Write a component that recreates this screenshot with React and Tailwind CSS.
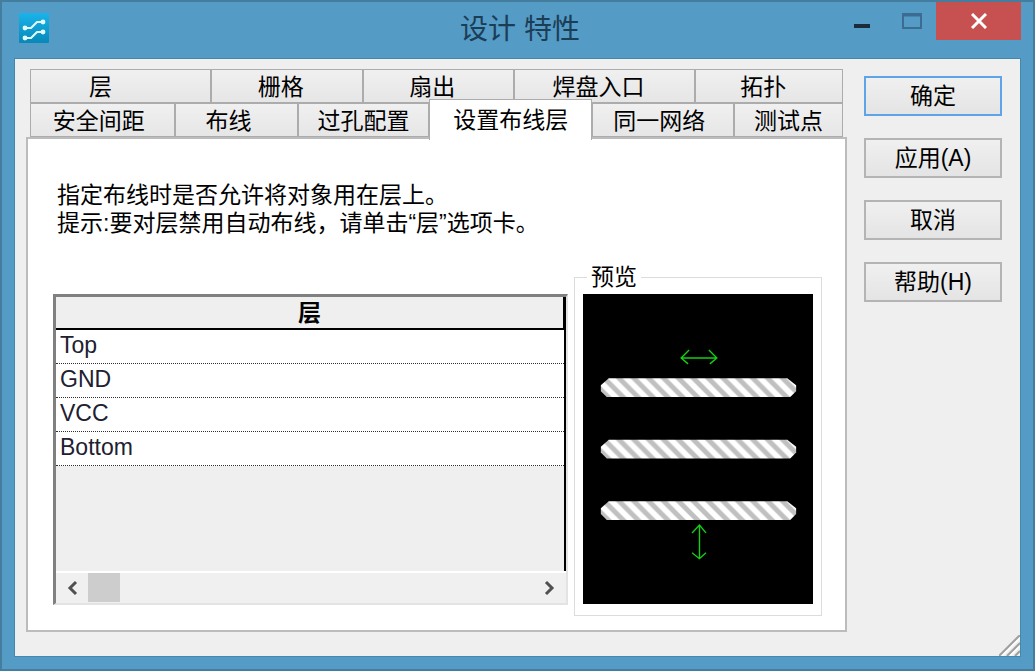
import clsx from 'clsx'

const TABS_BACK = [
  { label: '层',       size: 'flex-[158_1_0%]', pad: 'pr-10' },
  { label: '栅格',     size: 'flex-[157_1_0%]', pad: 'pr-3' },
  { label: '扇出',     size: 'flex-[156_1_0%]', pad: 'pr-3' },
  { label: '焊盘入口', size: 'flex-[191_1_0%]', pad: 'pr-3' },
  { label: '拓扑',     size: 'flex-[152_1_0%]', pad: 'pr-3' },
]

const TABS_FRONT = [
  { label: '安全间距',   size: 'flex-[143_1_0%]', pad: 'pr-2' },
  { label: '布线',       size: 'flex-[110_1_0%]', pad: 'pr-4' },
  { label: '过孔配置',   size: 'flex-[137_1_0%]' },
  { label: '设置布线层', size: 'flex-[170_1_0%]', active: true },
  { label: '同一网络',   size: 'flex-[139_1_0%]', pad: 'pr-2' },
  { label: '测试点',     size: 'flex-[113_1_0%]' },
]

const LAYERS = ['Top', 'GND', 'VCC', 'Bottom']

const ACTIONS = [
  { label: '确定', primary: true },
  { label: '应用(A)' },
  { label: '取消' },
  { label: '帮助(H)' },
]

function AppIcon() {
  return (
    <svg viewBox="0 0 30 30" className="w-[30px] h-[30px]" aria-hidden="true">
      <defs>
        <linearGradient id="logo" x1="0" y1="0" x2="0" y2="1">
          <stop offset="0" stopColor="#19b4ea" />
          <stop offset="1" stopColor="#0788b8" />
        </linearGradient>
      </defs>
      <rect width="30" height="30" rx="1" fill="url(#logo)" />
      <g fill="none" stroke="#e2f8ff" strokeWidth="2" strokeLinejoin="round">
        <path d="M6 15h6l6-6h6" />
        <path d="M6 25h6l6-6h6" />
      </g>
      <g fill="#e2f8ff">
        <circle cx="6" cy="15" r="2.4" />
        <circle cx="24" cy="9" r="2.4" />
        <circle cx="6" cy="25" r="2.4" />
        <circle cx="24" cy="19" r="2.4" />
      </g>
    </svg>
  )
}

function TitleBar() {
  return (
    <header className="grid grid-cols-[1fr_auto_1fr] h-14 pl-[17px] pr-3">
      <div className="pt-[11px]">
        <AppIcon />
      </div>
      <h1 className="self-center text-[28px] leading-8 text-[#1c3d56]">设计 特性</h1>
      <div className="flex justify-end items-start">
        <button aria-label="最小化" className="flex items-center justify-center w-[51px] h-[38px]">
          <svg viewBox="0 0 16 16" className="w-4 h-4"><path d="M0 13h16" stroke="#1b2a3d" strokeWidth="4" /></svg>
        </button>
        <button aria-label="最大化" className="flex items-center justify-center w-[49px] h-[38px]">
          <svg viewBox="0 0 20 16" className="w-5 h-4">
            <rect x="1" y="1" width="18" height="14" fill="none" stroke="#3c6c91" strokeWidth="2" />
            <path d="M0 2h20" stroke="#3c6c91" strokeWidth="3" />
          </svg>
        </button>
        <button aria-label="关闭" className="flex items-center justify-center w-[85px] h-[38px] bg-[#c75050]">
          <svg viewBox="0 0 16 16" className="w-4 h-4"><path d="M1 1l14 14M15 1L1 15" stroke="#fff" strokeWidth="3" /></svg>
        </button>
      </div>
    </header>
  )
}

function Tab({ label, size, pad, active }) {
  return (
    <button
      role="tab"
      aria-selected={!!active}
      className={clsx(
        'border border-[#acacac] text-center whitespace-nowrap',
        active
          ? 'relative z-10 h-[41px] -mt-1 -mb-[3px] bg-white border-b-0'
          : 'h-[34px] bg-linear-to-b from-[#f0f0f0] to-[#e6e6e6]',
        size,
        pad,
      )}
    >
      {label}
    </button>
  )
}

function ScrollArrow({ label, d }) {
  return (
    <button aria-label={label} className="flex items-center justify-center w-8 h-full">
      <svg viewBox="0 0 14 16" className="w-[14px] h-4">
        <path d={d} fill="none" stroke="#505050" strokeWidth="3" />
      </svg>
    </button>
  )
}

function LayerList() {
  return (
    <div className="flex-1 flex flex-col mt-[29px] mb-[11px] border-t-3 border-l-3 border-r-2 border-b-2
      border-t-[#808080] border-l-[#808080] border-r-[#e3e3e3] border-b-[#e3e3e3]">
      <div className="flex-1 bg-[#efefef] border-r-2 border-black">
        <table className="w-full border-separate border-spacing-0">
          <thead>
            <tr>
              <th className="h-[33px] p-0 bg-[#efefef] border-b-2 border-r border-black text-center font-bold leading-7">
                层
              </th>
            </tr>
          </thead>
          <tbody>
            {LAYERS.map(name => (
              <tr key={name}>
                <td className="h-[34px] p-0 pl-1 pb-1 bg-white border-b border-dotted border-[#303030] text-[#202030] leading-7">
                  {name}
                </td>
              </tr>
            ))}
          </tbody>
        </table>
      </div>
      {/* Horizontal scrollbar */}
      <div className="flex h-8 bg-[#f0f0f0] border-t-2 border-white">
        <ScrollArrow label="向左滚动" d="M11 2L5 8l6 6" />
        <div className="flex-1">
          <div className="w-8 h-[29px] bg-[#cdcdcd]" />
        </div>
        <ScrollArrow label="向右滚动" d="M3 2l6 6-6 6" />
      </div>
    </div>
  )
}

function Preview() {
  return (
    <fieldset className="w-[248px] shrink-0 border border-[#dcdcdc] px-2 pb-2">
      <legend className="ml-1 px-1 leading-6">预览</legend>
      <svg viewBox="0 0 232 313" className="block w-full mt-[5px] bg-black">
        <defs>
          <pattern id="hatch" width="15" height="15" patternUnits="userSpaceOnUse">
            <rect width="15" height="15" fill="#fff" />
            <path d="M0 0h7l15 15h-7zM-15 0h7l15 15h-7z" fill="#c0c0c0" />
          </pattern>
        </defs>
        {[85, 147, 209].map(y => (
          <g key={y} transform={`translate(18 ${y})`}>
            <path d="M8 0H188L197 7V13L191 19H6L0 13V7z" fill="url(#hatch)" />
          </g>
        ))}
        <g fill="none" stroke="#12d012" strokeWidth="1.4">
          <path d="M99 64.500h36M107 56.500l-8 8 7 6M127 56.500l8 8-7 6" />
          <path d="M117.500 233v34M110 241l7.500-8 6.500 8M110 261l7.500 6 6.500-6" />
        </g>
      </svg>
    </fieldset>
  )
}

export default function App() {
  return (
    <div
      className="min-h-screen flex flex-col border-2 border-[#457d9f] bg-[#549bc6] text-black text-[23px]
        font-['Liberation_Sans','Noto_Sans_CJK_SC',sans-serif]"
    >
      <TitleBar />

      <main className="relative flex-1 flex gap-[17px] mx-3 mb-3 pl-[11px] pt-[10px] pr-[18px] pb-6 border border-[#4587ad] bg-[#efefef]">
        <section className="flex-1 flex flex-col">
          <div role="tablist" className="px-1">
            <div className="flex">
              {TABS_BACK.map(t => <Tab key={t.label} {...t} />)}
            </div>
            <div className="flex">
              {TABS_FRONT.map(t => <Tab key={t.label} {...t} />)}
            </div>
          </div>

          <div role="tabpanel" className="flex-1 flex flex-col pt-[42px] pl-[25px] pr-[23px] pb-[14px] border-2 border-[#bcbcbc] bg-white">
            <p className="px-1 leading-7">
              指定布线时是否允许将对象用在层上。<br />
              提示:要对层禁用自动布线，请单击“层”选项卡。
            </p>
            <div className="flex-1 flex gap-[6px] mt-7">
              <LayerList />
              <Preview />
            </div>
          </div>
        </section>

        <aside className="flex flex-col gap-[22px] w-[138px] pt-[7px]">
          {ACTIONS.map(a => (
            <button
              key={a.label}
              className={clsx(
                'h-10 border-2 bg-linear-to-b from-[#f0f0f0] to-[#e4e4e4]',
                a.primary ? 'border-[#5ea4e8]' : 'border-[#b4b4b4]',
              )}
            >
              {a.label}
            </button>
          ))}
        </aside>

        {/* Resize grip */}
        <svg viewBox="0 0 21 21" className="absolute right-0 bottom-0 w-[21px] h-[21px]" aria-hidden="true">
          <path d="M0 21L21 0M8 21L21 8M16 21l5-5" stroke="#a0a0a0" strokeWidth="2" />
          <path d="M3 21L21 3M11 21L21 11" stroke="#fff" strokeWidth="1.500" />
        </svg>
      </main>
    </div>
  )
}
